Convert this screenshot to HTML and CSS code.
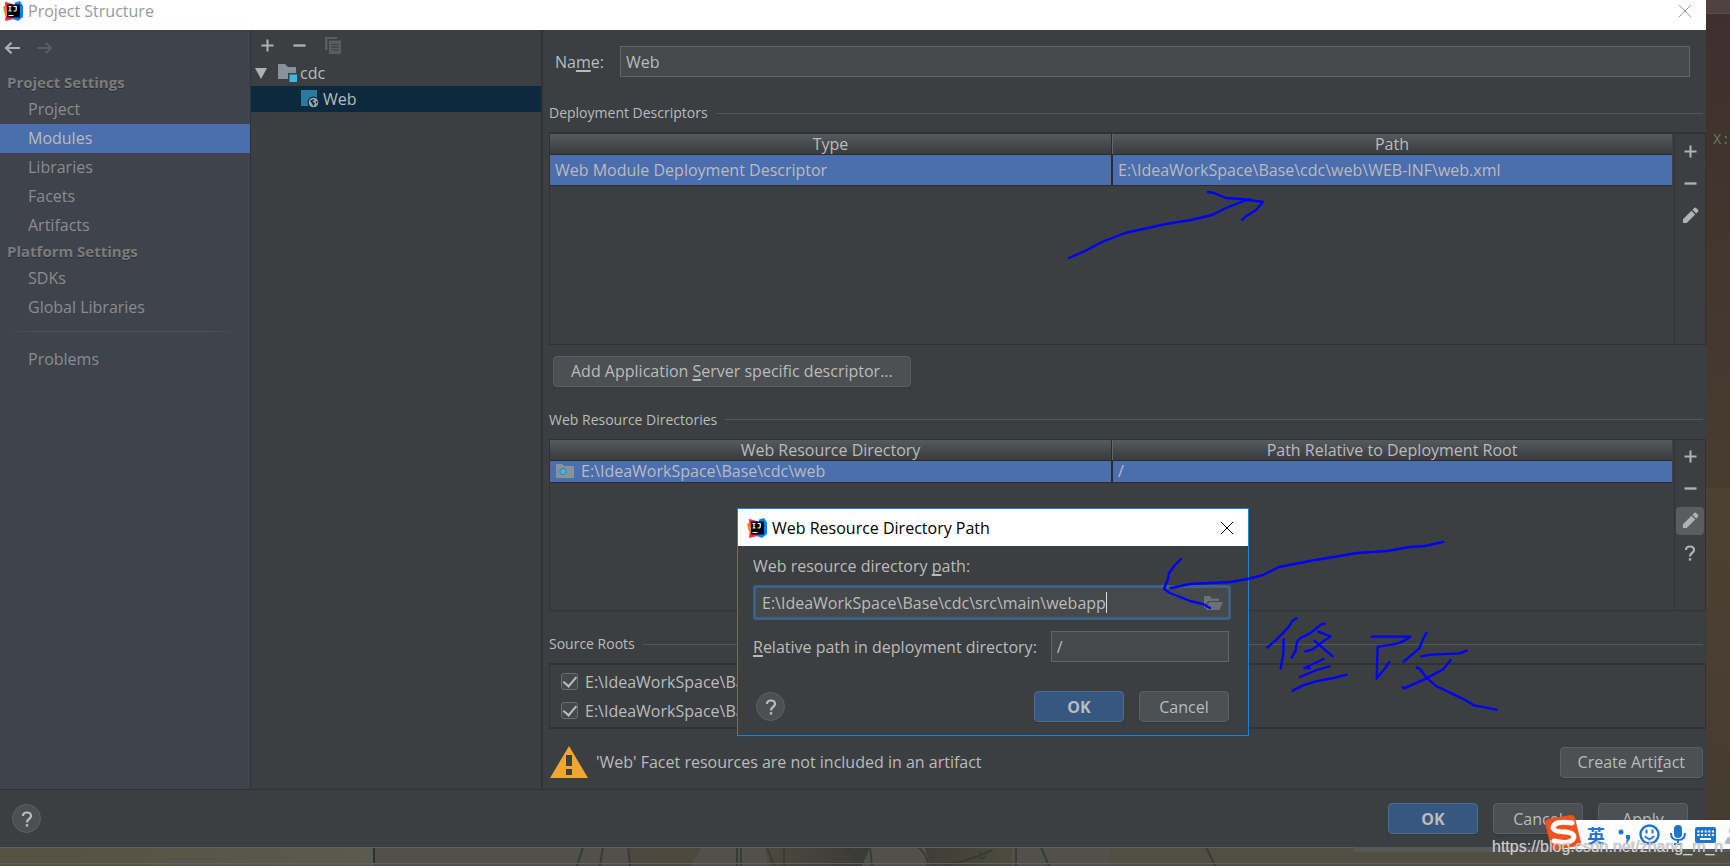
FILE: index.html
```html
<!DOCTYPE html>
<html lang="en">
<head>
<meta charset="utf-8">
<title>Project Structure</title>
<link rel="stylesheet" href="styles.css">
</head>
<body>
<svg class="defs" aria-hidden="true">
  <symbol id="ij" viewBox="0 0 20 20">
    <path fill="#fe2857" d="M2 1 12 4 11 18 2 20 3 12z"/>
    <path fill="#fc801d" d="M0 6 5 3 6 16 2 14z"/>
    <path fill="#087cfa" d="M12 1.500 17 0 20 5V16L15 20 10 18z"/>
    <path fill="#fe2857" d="M2 1 9 3 8 6 3 8z"/>
    <path fill="#000" d="M4 3.500H17V16.500H4z"/>
    <path fill="none" stroke="#fff" stroke-width="1.200" d="M5.500 5.500H8.500M7 5.500V10M5.500 10H8.500M10.500 5.500H13.200V9Q13.200 10 12 10H10.500M5.500 14.500H10.500"/>
  </symbol>
  <symbol id="close" viewBox="0 0 12 12"><path fill="none" stroke="currentColor" d="M0 0 12 12M12 0 0 12"/></symbol>
  <symbol id="plus" viewBox="0 0 14 14"><path fill="none" stroke="currentColor" stroke-width="2.200" d="M7 .5V13.500M.5 7H13.500"/></symbol>
  <symbol id="minus" viewBox="0 0 14 14"><path fill="none" stroke="currentColor" stroke-width="2.500" d="M.5 7H13.500"/></symbol>
  <symbol id="pencil" viewBox="0 0 18 18"><path fill="currentColor" d="M1 13 10 4 14 8 5 17H1zM11 3 13 1Q14 0 15.500 1.500L16.500 2.500Q18 4 17 5L15 7z"/></symbol>
  <symbol id="help" viewBox="0 0 12 16"><path fill="none" stroke="currentColor" stroke-width="2.200" d="M2 5Q2 1.500 6 1.500T10 5Q10 6.500 8 8T6 11.500"/><path fill="currentColor" d="M4.800 13.200H7.200V15.600H4.800z"/></symbol>
  <symbol id="back" viewBox="0 0 16 12"><path fill="none" stroke="currentColor" stroke-width="2.200" d="M16 6H2M7.500 .8 2 6 7.500 11.200"/></symbol>
</svg>

<div class="desktop">
  <main class="window">
    <header class="titlebar">
      <svg class="logo"><use href="#ij"/></svg>
      <h1>Project Structure</h1>
      <button class="close" aria-label="Close"><svg><use href="#close"/></svg></button>
    </header>

    <div class="panes">
      <nav class="sidebar">
        <div class="history">
          <button aria-label="Back"><svg><use href="#back"/></svg></button>
          <button aria-label="Forward" class="forward"><svg><use href="#back"/></svg></button>
        </div>
        <h2>Project Settings</h2>
        <a href="#project">Project</a>
        <a href="#modules" class="active">Modules</a>
        <a href="#libraries">Libraries</a>
        <a href="#facets">Facets</a>
        <a href="#artifacts">Artifacts</a>
        <h2>Platform Settings</h2>
        <a href="#sdks">SDKs</a>
        <a href="#global">Global Libraries</a>
        <hr>
        <a href="#problems">Problems</a>
      </nav>

      <section class="modules" aria-label="Modules">
        <div class="tree-tools">
          <button aria-label="Add"><svg><use href="#plus"/></svg></button>
          <button aria-label="Remove"><svg><use href="#minus"/></svg></button>
          <button aria-label="Copy" class="copy"><svg viewBox="0 0 16 17"><path fill="#5a5c5d" d="M0 0H12V2H2.500V13H0zM4 3.500H16V17H4z"/><path stroke="#3c3f41" stroke-width="1.200" d="M6.500 7.500H13.500M6.500 10.200H13.500M6.500 13H13.500"/></svg></button>
        </div>
        <div class="node">
          <svg class="twisty" viewBox="0 0 12 11"><path fill="#afb1b3" d="M0 0H12L6 11z"/></svg>
          <svg class="folder" viewBox="0 0 19 18"><path fill="#87939a" d="M0 0H7L10 3H18V15H0z"/><path fill="#3c3f41" d="M10 9H19V18H10z"/><path fill="#40b6e0" d="M11.500 10.500H19V18H11.500z"/></svg>
          <span>cdc</span>
        </div>
        <div class="node child">
          <svg class="facet" viewBox="0 0 18 18"><path fill="#287a9e" d="M0 0H16V16H0z"/><circle cx="12.500" cy="12.500" r="6" fill="#0d293e"/><circle cx="12.500" cy="12.500" r="4.800" fill="#9aa7b0"/><path fill="#0d293e" d="M9 11Q12 8.500 13.500 9.500L11.500 12 14 13 12.500 16.500 11 13.500zM14.500 11.500 16.500 11 16 14z"/></svg>
          <span>Web</span>
        </div>
      </section>

      <section class="editor">
        <div class="name-row">
          <label for="name">Na<u>m</u>e:</label>
          <input id="name" class="field" value="Web">
        </div>

        <h3 class="group">Deployment Descriptors</h3>
        <div class="box descriptors">
          <div class="grid">
            <table>
              <thead><tr><th>Type</th><th>Path</th></tr></thead>
              <tbody><tr><td>Web Module Deployment Descriptor</td><td>E:\IdeaWorkSpace\Base\cdc\web\WEB-INF\web.xml</td></tr></tbody>
            </table>
          </div>
          <div class="tools">
            <button aria-label="Add descriptor"><svg><use href="#plus"/></svg></button>
            <button aria-label="Remove descriptor"><svg><use href="#minus"/></svg></button>
            <button aria-label="Edit descriptor"><svg class="pencil"><use href="#pencil"/></svg></button>
          </div>
        </div>
        <button class="btn add-server">Add Application&nbsp;<u>S</u>erver specific descriptor...</button>

        <h3 class="group">Web Resource Directories</h3>
        <div class="box resources">
          <div class="grid">
            <table>
              <thead><tr><th>Web Resource Directory</th><th>Path Relative to Deployment Root</th></tr></thead>
              <tbody><tr><td><div class="cell"><svg class="dir" viewBox="0 0 18 14"><path fill="#87939a" d="M0 0H6L8 2H18V14H0z"/><circle cx="7" cy="7.500" r="3.200" fill="#40b6e0" stroke="#4a7ba0"/></svg>E:\IdeaWorkSpace\Base\cdc\web</div></td><td>/</td></tr></tbody>
            </table>
          </div>
          <div class="tools">
            <button aria-label="Add directory"><svg><use href="#plus"/></svg></button>
            <button aria-label="Remove directory"><svg><use href="#minus"/></svg></button>
            <button aria-label="Edit directory" class="pressed"><svg class="pencil"><use href="#pencil"/></svg></button>
            <button aria-label="Help"><svg class="question"><use href="#help"/></svg></button>
          </div>
        </div>

        <h3 class="group">Source Roots</h3>
        <div class="roots">
          <label><input type="checkbox" checked>E:\IdeaWorkSpace\Base\cdc\src\main\java</label>
          <label><input type="checkbox" checked>E:\IdeaWorkSpace\Base\cdc\src\main\resources</label>
        </div>

        <div class="warning">
          <svg viewBox="0 0 38 32"><path fill="#f0a732" d="M19 0 38 32H0z"/><path fill="#3c3f41" d="M16 9H22V20H16zM16 23H22V29H16z"/></svg>
          <p>'Web' Facet resources are not included in an artifact</p>
          <button class="btn">Create Arti<u>f</u>act</button>
        </div>
      </section>
    </div>

    <footer class="footer">
      <button class="round" aria-label="Help"><svg class="question"><use href="#help"/></svg></button>
      <button class="btn primary">OK</button>
      <button class="btn">Cancel</button>
      <button class="btn">Apply</button>
    </footer>
  </main>

  <aside class="behind"><div class="behind-top"></div><div class="behind-code"><code>X:</code></div><div class="behind-low"></div><div class="behind-bar"></div></aside>

  <svg class="wallpaper" viewBox="0 0 1730 19" preserveAspectRatio="xMinYMin slice" aria-hidden="true">
    <defs><linearGradient id="sand"><stop offset="0" stop-color="#565141"/><stop offset="1" stop-color="#5a5a4e"/></linearGradient>
    <linearGradient id="leg"><stop offset="0" stop-color="#4c493f"/><stop offset=".5" stop-color="#373735"/><stop offset="1" stop-color="#4d4c3d"/></linearGradient></defs>
    <path fill="#51504a" d="M0 0H1730V19H0z"/>
    <path fill="url(#sand)" d="M0 0H373V19H0z"/>
    <path fill="#504f42" d="M1110 0H1730V19H1110z"/>
    <path fill="#2e2f2f" d="M373 0H375V16H373z"/>
    <path fill="#4d483c" d="M628 0H702L690 19H630z"/>
    <path fill="url(#leg)" d="M765 0H870L862 19H768zM925 0H1012V19H930z"/>
    <path fill="none" stroke="#393b3a" stroke-width="2" d="M583 0 577 19M603 0 600 19M628 0 630 19M737 0V19M741 0V19M767 0 774 19M784 0V19M842 0Q856 2 856 19M870 0 872 19M918 0Q928 8 928 19M945 17Q965 16 992 3M980 4Q978 16 986 9M1016 0V19M1041 0 1049 19M1206 0 1215 19"/>
    <path fill="#55575b" d="M1354 0H1730V5H1354z"/>
    <path fill="none" stroke="#62625c" d="M0 .5H1354M0 16.500H1730"/>
  </svg>
</div>

<section class="dialog" role="dialog" aria-labelledby="dialog-title">
  <header class="dialog-title">
    <svg class="logo"><use href="#ij"/></svg>
    <h2 id="dialog-title">Web Resource Directory Path</h2>
    <button class="close" aria-label="Close dialog"><svg><use href="#close"/></svg></button>
  </header>
  <div class="dialog-body">
    <label for="dir">Web resource directory <u>p</u>ath:</label>
    <div class="focus-field">
      <input id="dir" value="E:\IdeaWorkSpace\Base\cdc\src\main\webapp"><span class="caret"></span>
      <button aria-label="Browse"><svg viewBox="0 0 19 14"><path fill="#6a7073" d="M0 0H6L8 2.500H15V5H4L1 12H0z"/><path fill="#6a7073" d="M5 6H19L15.500 14H1.500z"/></svg></button>
    </div>
    <div class="relative-row">
      <label for="rel"><u>R</u>elative path in deployment directory:</label>
      <input id="rel" class="field" value="/">
    </div>
    <div class="dialog-actions">
      <button class="round" aria-label="Dialog help"><svg class="question"><use href="#help"/></svg></button>
      <button class="btn primary">OK</button>
      <button class="btn">Cancel</button>
    </div>
  </div>
</section>

<svg class="ink" viewBox="0 0 1730 866" aria-hidden="true">
  <path d="M1069 258 1085 251 1102 242 1125 233 1166 224 1191 220 1212 215 1226 208 1249 199M1208 192 1214 193 1226 198 1241 199 1263 202 1256 210 1245 217 1242 220"/>
  <path d="M1443 542 1425 546 1410 547 1387 551 1357 553 1310 561 1279 567 1263 575 1248 579 1230 582 1190 584 1171 588M1181 559 1175 565 1169 573 1168 579 1164 589 1170 593 1190 601 1203 604 1210 608"/>
  <g transform="translate(1160 530) scale(.33333)" stroke-width="7">
    <path d="M410 265 398 272 385 292 350 328 322 353M371 328 370 370 362 415M494 281 484 283 450 310 420 325 411 335 407 362 395 383M475 305 512 319 485 338 458 358 436 364M463 332 518 379M491 387 433 414H449M509 409 470 420 420 441M560 434 520 444 465 455 430 466 398 482"/>
    <path d="M635 320H751Q730 338 700 343L653 350 650 445 675 415 688 396M800 308 790 325 778 355 731 395M784 379 815 374 900 370 920 362M872 390 850 418 800 445 732 475 728 471M770 412 780 417 800 443 828 468 912 508 942 526 1010 539"/>
  </g>
</svg>

<div class="ime" aria-label="Input method">
  <svg class="sogou" viewBox="0 0 36 35"><path fill="#f4511e" d="M3 4 26 0Q29 0 30 3L36 27Q36 30 33 31L10 35Q7 35 6 32L0 8Q0 5 3 4z"/><path fill="none" stroke="#fff" stroke-width="5" stroke-linecap="round" d="M27 8Q9 5 8 13 9 17 21 17 29 18 29 22 27 30 9 26"/></svg>
  <span class="lang">英</span>
  <svg class="punct" viewBox="0 0 12 16"><circle cx="3" cy="5" r="2.500"/><path d="M8 8H12V12L9 16H8L9 12H8z"/></svg>
  <svg class="face" viewBox="0 0 21 21"><circle cx="10.500" cy="10.500" r="9" fill="none" stroke="#1f74cb" stroke-width="2.400"/><path fill="none" stroke="#1f74cb" stroke-width="2" d="M7.500 5.500V9.500M13.500 5.500V9.500M6 12Q10.500 18 15 12"/></svg>
  <svg class="mic" viewBox="0 0 16 20"><rect x="4" width="8" height="13" rx="4"/><path fill="none" stroke="#1f74cb" stroke-width="2" d="M1 8Q1 15 8 15T15 8M8 15V19M4 19H12"/></svg>
  <svg class="keys" viewBox="0 0 21 16"><rect width="21" height="16" rx="2"/><path stroke="#fff" stroke-width="2" stroke-dasharray="2 1.600" d="M2.500 4.500H19M2.500 8H19"/><path stroke="#fff" stroke-width="2" d="M5 12H16"/></svg>
  <svg class="person" viewBox="0 0 18 18"><circle cx="9" cy="5" r="5"/><path d="M0 18Q0 10 9 10T18 18z"/></svg>
</div>
<p class="watermark">https://blog.csdn.net/zhang_m_n</p>
</body>
</html>
```

FILE: styles.css
```css
* { box-sizing: border-box; }
html, body { height: 100%; }
body {
  margin: 0;
  position: relative;
  overflow: hidden;
  background: #504f42;
  color: #bbbbbb;
  font: 16px/22px "Open Sans", "Noto Sans", "Noto Sans CJK SC", sans-serif;
}
h1, h2, h3, p { margin: 0; font-size: 16px; font-weight: 400; }
button, input { font: inherit; color: inherit; }
button { padding: 0; border: 0; background: none; display: flex; align-items: center; justify-content: center; }
svg { display: block; flex: none; }
u { text-underline-offset: 2px; text-decoration-thickness: 2px; text-decoration-skip-ink: none; }
.defs { position: absolute; width: 0; height: 0; }

.desktop { min-height: 100%; height: 100%; display: grid; grid-template: minmax(0, 1fr) 19px / minmax(0, 1fr) 24px; }
.window { display: flex; flex-direction: column; background: #3c3f41; min-height: 0; }
.titlebar { height: 30px; flex: none; display: flex; align-items: center; gap: 5px; padding: 0 15px 8px 3px; background: #fff; color: #999; }
.logo { width: 20px; height: 20px; }
.close { margin-left: auto; }
.close svg { width: 12px; height: 12px; overflow: visible; }
.panes { flex: 1; min-height: 0; display: grid; grid-template-columns: 251px 292px minmax(0, 1fr); }

.sidebar { background: #3f434c; border-right: 1px solid #323334; color: #8c8c8c; }
.history { height: 41px; padding: 12px 0 0 4px; display: flex; gap: 17px; align-items: flex-start; color: #afb1b3; }
.history svg { width: 16px; height: 12px; }
.history .forward { color: #5c5c5c; transform: scaleX(-1); }
.sidebar h2 { height: 24px; line-height: 22px; padding-left: 7px; font-size: 15px; font-weight: 700; color: #7b7b7b; text-shadow: 0 1px #2c2e33; }
.sidebar a { display: block; height: 29px; line-height: 29px; padding-left: 28px; color: inherit; text-decoration: none; }
.sidebar a.active { background: #4b6eaf; color: #bbbbbb; }
.sidebar hr { height: 1px; margin: 9px 12px 13px 6px; border: 0; background: linear-gradient(90deg, transparent, #515457 15%, #515457 85%, transparent); }

.modules { border-right: 2px solid #323232; }
.tree-tools { display: flex; align-items: center; height: 30px; padding-left: 10px; gap: 19px; color: #afb1b3; }
.tree-tools svg, .tools svg { width: 13px; height: 13px; }
.tree-tools .copy svg { width: 16px; height: 17px; }
.node { height: 26px; display: flex; align-items: center; padding-left: 4px; }
.node.child { padding-left: 50px; background: #0d293e; }
.twisty { width: 12px; height: 11px; margin-right: 11px; }
.folder { width: 19px; height: 18px; margin-right: 3px; }
.facet { width: 18px; height: 18px; margin-right: 4px; }

.editor { display: flex; flex-direction: column; min-height: 0; padding: 16px 0 11px 6px; }
.name-row { display: flex; align-items: center; gap: 16px; padding: 0 16px 0 6px; }
.name-row .field { flex: 1; }
.field { height: 31px; min-width: 0; padding: 0 5px; background: #45494a; border: 1px solid #646464; outline: 0; }
.group { display: flex; align-items: center; gap: 8px; height: 22px; margin: 22px 3px 8px 0; font-size: 14px; }
.name-row + .group { margin-top: 25px; }
.group::after { content: ""; flex: 1; height: 1px; background: #515557; }
.box { display: flex; min-height: 0; border: 1px solid #323232; }
.descriptors { flex: 1 1 212px; border-top-width: 2px; }
.resources { flex: 1 1 172px; }
.grid { flex: 1; border-right: 1px solid #323232; padding-right: 2px; }
table { width: 100%; border-collapse: separate; border-spacing: 0; table-layout: fixed; }
th { height: 21px; padding: 0; font-weight: 400; line-height: 20px; background: linear-gradient(#555a5d, #393b3d); border-bottom: 1px solid #2c2c2c; }
th + th { border-left: 1px solid #2c2c2c; box-shadow: inset 1px 0 #646668; }
td { height: 31px; padding: 0 5px; line-height: 20px; background: #4b6eaf; border-bottom: 1px solid #2c2c2c; }
td + td { border-left: 2px solid #2c2c2c; }
.resources td { height: 22px; }
.cell { display: flex; align-items: center; gap: 7px; }
.dir { width: 18px; height: 14px; margin-left: 1px; }
.tools { width: 30px; padding: 3px 1px; display: flex; flex-direction: column; gap: 4px; color: #afb1b3; }
.tools button { height: 28px; border-radius: 4px; }
.tools .pressed { background: #5a5d5f; }
.tools .pencil { width: 17px; height: 17px; }
.question, .tools .question { width: 12px; height: 16px; }

.btn { height: 31px; min-width: 90px; padding: 0 17px; border: 1px solid #5e6060; border-radius: 4px; background: #4c5052; box-shadow: 0 1px 1px #353739; white-space: nowrap; }
.primary { background: #365880; border-color: #4c708c; font-weight: 700; }
.add-server { align-self: flex-start; margin: 11px 0 0 4px; }
.roots { border: 1px solid #323232; border-width: 2px 1px; padding: 2px 11px; margin-top: 0; flex: none; }
.roots label { display: flex; align-items: center; gap: 7px; height: 29px; }
.roots input { appearance: none; width: 17px; height: 17px; margin: 0; border: 1px solid #6b6b6b; border-radius: 3px; background: #43494a; display: grid; place-items: center; }
.roots input::before { content: ""; width: 6px; height: 11px; border: solid #bbb; border-width: 0 2px 2px 0; transform: rotate(40deg) translate(-1px, -1px); }
.warning { display: flex; align-items: center; gap: 8px; padding: 17px 3px 0 1px; }
.warning svg { width: 38px; height: 32px; }
.warning .btn { margin-left: auto; }

.footer { flex: none; height: 58px; border-top: 1px solid #323232; display: flex; align-items: center; gap: 15px; padding: 0 18px 0 12px; }
.round { width: 29px; height: 29px; margin-right: auto; border: 1px solid #5e6060; border-radius: 50%; background: #4c5052; color: #bbb; }

.behind { display: flex; flex-direction: column; }
.behind-top { height: 14px; background: #4e4342; border-bottom: 1px solid #5e4a48; }
.behind-code { flex: 418; display: flex; padding: 116px 0 0 7px; background: linear-gradient(#402f2e, #41342e 35%, #463d2f); color: #5f7c50; }
.behind-code code { font: 14px/20px "Liberation Mono", monospace; }
.behind-low { flex: 396; background: linear-gradient(#4c4233, #453c30); }
.behind-bar { height: 19px; flex: none; background: #4b4c50; }
.wallpaper { grid-column: 1 / -1; width: 100%; height: 19px; }

.dialog { position: absolute; left: 737px; top: 508px; width: 512px; border: 1px solid #1883d7; background: #3c3f41; }
.dialog-title { height: 37px; display: flex; align-items: center; gap: 5px; padding: 0 15px 0 9px; background: #fff; color: #000; }
.dialog-body { padding: 9px 17px 13px 15px; }
.dialog-body > label { display: block; }
.focus-field { display: flex; align-items: center; height: 35px; margin-top: 8px; padding: 0 5px 0 6px; border: 3px solid #3d6185; border-radius: 3px; background: #45494a; }
.focus-field input { field-sizing: content; min-width: 0; padding: 0; border: 0; outline: 0; background: none; }
.caret { width: 1px; height: 21px; background: #ddd; }
.focus-field button { margin-left: auto; }
.focus-field button svg { width: 19px; height: 14px; }
.relative-row { display: flex; align-items: center; gap: 14px; margin: 11px 2px 0 0; }
.relative-row label { white-space: nowrap; }
.relative-row .field { flex: 1; }
.dialog-actions { display: flex; align-items: center; gap: 15px; margin: 29px 2px 0 3px; }

.ink { position: absolute; left: 0; top: 0; width: 1730px; height: 866px; pointer-events: none; fill: none; stroke: #0000ff; stroke-width: 2.400; stroke-linecap: round; stroke-linejoin: round; }
.ime { position: absolute; left: 1556px; right: 0; top: 820px; height: 29px; display: flex; align-items: center; background: #fff; color: #1f74cb; fill: #1f74cb; overflow: visible; }
.ime .sogou { width: 36px; height: 35px; margin: -4px 6px 0 -11px; }
.lang { width: 18px; font: 700 18px/26px "Noto Sans CJK SC", sans-serif; }
.punct { width: 12px; height: 16px; margin-left: 13px; }
.face { width: 21px; height: 21px; margin-left: 9px; }
.mic { width: 16px; height: 20px; margin-left: 10px; }
.keys { width: 21px; height: 16px; margin-left: 9px; }
.person { width: 18px; height: 18px; margin: 0 -11px 0 9px; fill: #a9b9d3; }
.watermark { position: absolute; left: 1492px; top: 836px; font: 16px/22px "Liberation Sans", Arial, sans-serif; color: rgba(225, 225, 225, .85); text-shadow: 0 0 1px #777; white-space: nowrap; }
```
